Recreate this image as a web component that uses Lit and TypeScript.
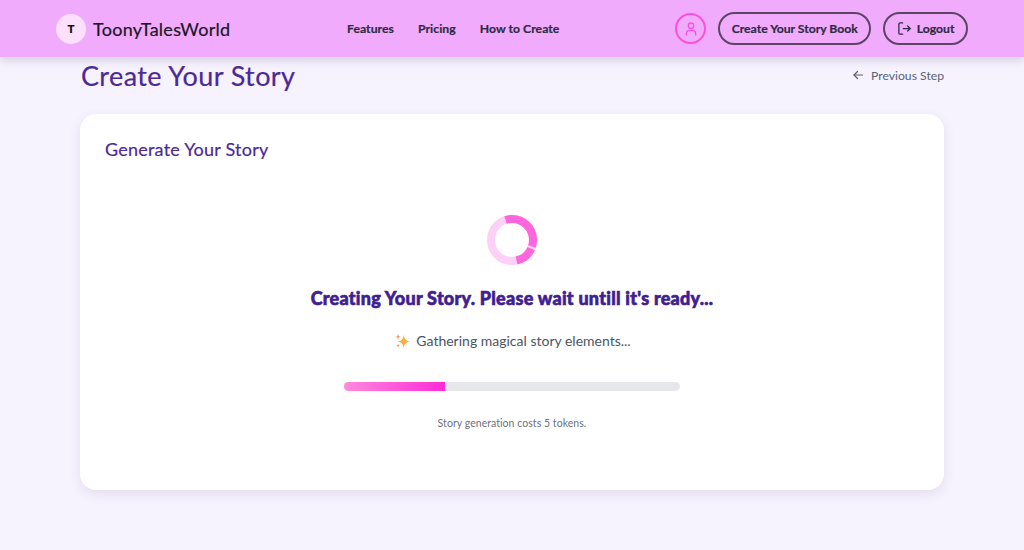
import { LitElement, html, css } from 'lit';
import { customElement } from 'lit/decorators.js';

@customElement('app-root')
export class AppRoot extends LitElement {
  static styles = css`
    :host {
      display: block;
      min-height: 550px;
      background: #f6f3ff;
      font-family: 'Lato', 'Noto Sans', sans-serif;
      color: #1f1b2e;
    }

    header {
      height: 57px;
      box-sizing: border-box;
      padding: 0 56px;
      background: #f0abfc;
      box-shadow: 0 4px 8px rgba(60, 40, 80, 0.16);
      display: flex;
      align-items: center;
    }

    .brand {
      display: flex;
      align-items: center;
      gap: 7px;
      width: 291px;
    }

    .brand-mark {
      width: 30px;
      height: 30px;
      border-radius: 50%;
      background: #fce0fb;
      color: #111;
      display: flex;
      align-items: center;
      justify-content: center;
      font: 800 11px 'Inter', sans-serif;
    }

    .brand-name {
      font-size: 18px;
      letter-spacing: 0.27px;
      color: #1c1426;
      -webkit-text-stroke: 0.2px #1c1426;
    }

    nav {
      display: flex;
      gap: 24px;
      font-size: 12.2px;
      font-weight: 700;
      letter-spacing: 0.05px;
      color: #2f2a42;
      -webkit-text-stroke: 0.2px #2f2a42;
    }

    .actions {
      margin-left: auto;
      display: flex;
      align-items: center;
      gap: 12px;
    }

    .avatar {
      width: 31px;
      height: 31px;
      box-sizing: border-box;
      border: 2px solid #ff4fd8;
      border-radius: 50%;
      display: flex;
      align-items: center;
      justify-content: center;
    }

    .pill {
      height: 33px;
      box-sizing: border-box;
      padding: 0 11.5px;
      border: 2px solid #5d4465;
      border-radius: 17px;
      display: flex;
      align-items: center;
      gap: 5px;
      font-size: 12.2px;
      font-weight: 700;
      color: #2f2a42;
      -webkit-text-stroke: 0.2px #2f2a42;
    }

    main {
      width: 864px;
      margin: 0 auto;
    }

    .title-row {
      height: 57px;
      display: flex;
      align-items: flex-start;
      justify-content: space-between;
    }

    h1 {
      margin: 1px 0 0 1px;
      font-size: 27px;
      line-height: 36px;
      font-weight: 400;
      letter-spacing: 0.4px;
      color: #4c2a96;
      -webkit-text-stroke: 0.2px #4c2a96;
    }

    .back {
      margin-top: 10.5px;
      display: flex;
      align-items: center;
      gap: 7px;
      font-size: 12.2px;
      line-height: 15px;
      color: #5b6275;
    }

    .card {
      height: 376px;
      box-sizing: border-box;
      padding: 23px 24px;
      background: #fff;
      border-radius: 16px;
      box-shadow: 0 4px 12px rgba(60, 40, 80, 0.1);
      display: flex;
      flex-direction: column;
    }

    h2 {
      margin: 0 0 0 1px;
      font-size: 18px;
      line-height: 24px;
      font-weight: 400;
      letter-spacing: 0.22px;
      color: #4c2a96;
      -webkit-text-stroke: 0.2px #4c2a96;
    }

    .loading {
      margin-top: 54px;
      display: flex;
      flex-direction: column;
      align-items: center;
    }

    .spinner {
      display: block;
      width: 50px;
      height: 50px;
    }

    h3 {
      margin: 21px 0 0;
      font-size: 18px;
      line-height: 24px;
      font-weight: 900;
      letter-spacing: 0.25px;
      color: #40208f;
      -webkit-text-stroke: 0.6px #40208f;
    }

    .stage {
      margin: 19px 0 0 2px;
      display: flex;
      align-items: center;
      gap: 6px;
      font-size: 14px;
      line-height: 24px;
      color: #4b5563;
    }

    .track {
      margin-top: 29px;
      width: 336px;
      height: 9px;
      border-radius: 5px;
      background: #e5e7eb;
      overflow: hidden;
    }

    .fill {
      height: 100%;
      background: linear-gradient(90deg, #ff8ade, #ff2bd6);
    }

    .cost {
      margin-top: 24px;
      font-size: 10.5px;
      line-height: 16px;
      letter-spacing: 0.05px;
      color: #6b7280;
    }
  `;

  override render() {
    const progress = 30;
    return html`
      <header>
        <div class="brand">
          <span class="brand-mark">T</span>
          <span class="brand-name">ToonyTalesWorld</span>
        </div>
        <nav>
          <span>Features</span>
          <span>Pricing</span>
          <span>How to Create</span>
        </nav>
        <div class="actions">
          <span class="avatar">
            <svg width="16" height="16" viewBox="0 0 24 24" fill="none" stroke="#ff4fd8" stroke-width="2" stroke-linecap="round" stroke-linejoin="round">
              <circle cx="12" cy="7" r="4"></circle>
              <path d="M5 21v-2a5 5 0 0 1 5-5h4a5 5 0 0 1 5 5v2"></path>
            </svg>
          </span>
          <span class="pill">Create Your Story Book</span>
          <span class="pill">
            <svg width="15" height="15" viewBox="0 0 24 24" fill="none" stroke="#2f2a42" stroke-width="2" stroke-linecap="round" stroke-linejoin="round">
              <path d="M9 3H5a2 2 0 0 0-2 2v14a2 2 0 0 0 2 2h4"></path>
              <path d="M10 12h11"></path>
              <path d="M17 8l4 4-4 4"></path>
            </svg>
            Logout
          </span>
        </div>
      </header>

      <main>
        <div class="title-row">
          <h1>Create Your Story</h1>
          <span class="back">
            <svg width="12" height="12" viewBox="0 0 24 24" fill="none" stroke="#5b6275" stroke-width="2.4" stroke-linecap="round" stroke-linejoin="round">
              <path d="M21 12H4"></path>
              <path d="M11 5l-7 7 7 7"></path>
            </svg>
            Previous Step
          </span>
        </div>

        <section class="card">
          <h2>Generate Your Story</h2>
          <div class="loading">
            <svg class="spinner" viewBox="0 0 50 50" fill="none" stroke-width="8">
              <circle cx="25" cy="25" r="21" stroke="#fdd0f7"></circle>
              <g transform="rotate(-90 25 25)" stroke="#ff66dd">
                <circle cx="25" cy="25" r="21" pathLength="360" stroke-dasharray="126 234" stroke-dashoffset="18"></circle>
                <circle cx="25" cy="25" r="21" pathLength="360" stroke-dasharray="53 307" stroke-dashoffset="-114"></circle>
              </g>
            </svg>
            <h3>Creating Your Story. Please wait untill it's ready...</h3>
            <div class="stage">
              <svg width="15" height="15" viewBox="0 0 24 24">
                <path fill="#fbae3c" d="M14 1c1 7 3 9.500 10 11c-7 1.500-9 4-10 11c-1-7-3-9.500-10-11c7-1.500 9-4 10-11z"></path>
                <path fill="#f79a6c" d="M5 0c.5 3 1.400 3.900 4.500 4.500c-3.100.6-4 1.500-4.500 4.500c-.5-3-1.400-3.900-4.500-4.500c3.100-.6 4-1.500 4.500-4.500z"></path>
                <path fill="#f79a6c" d="M5 15c.4 2.300 1.100 3 3.500 3.500c-2.400.5-3.100 1.200-3.500 3.500c-.4-2.300-1.100-3-3.500-3.500c2.400-.5 3.100-1.200 3.500-3.500z"></path>
              </svg>
              Gathering magical story elements...
            </div>
            <div class="track"><div class="fill" style="width: ${progress}%"></div></div>
            <div class="cost">Story generation costs 5 tokens.</div>
          </div>
        </section>
      </main>
    `;
  }
}
